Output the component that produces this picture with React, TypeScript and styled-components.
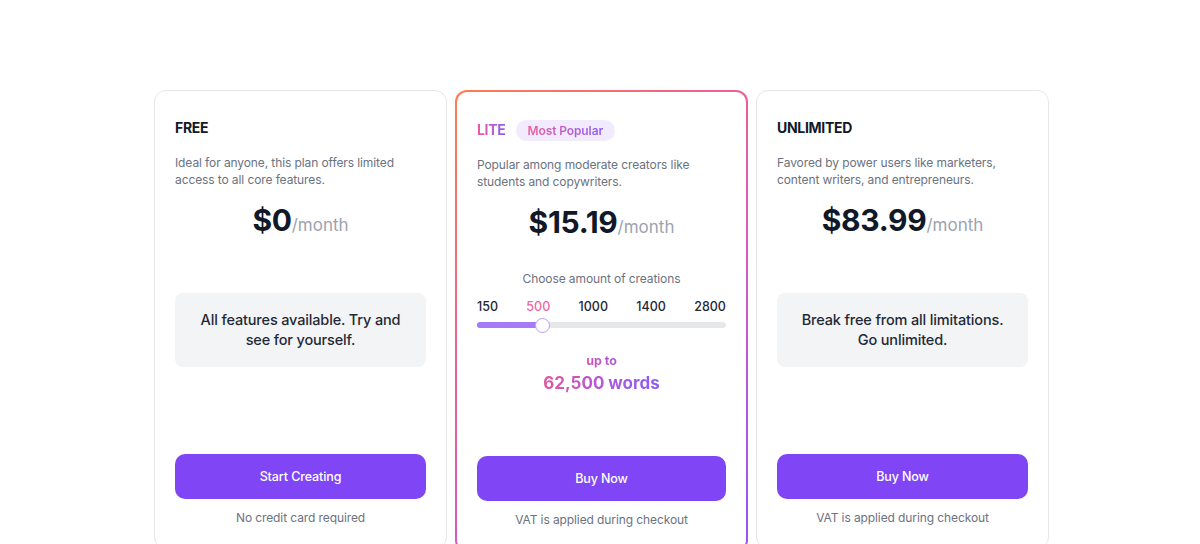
import React from "react";
import styled, { createGlobalStyle, css } from "styled-components";

const Global = createGlobalStyle`
  html, body { margin: 0; padding: 0; background: #ffffff; }
  body { font-family: Inter, "Noto Sans", sans-serif; -webkit-font-smoothing: antialiased; }
  * { box-sizing: border-box; }
`;

const Page = styled.main`
  height: 544px;
  overflow: hidden;
  padding-top: 90px;
  display: flex;
  justify-content: center;
`;

const Grid = styled.div`
  display: grid;
  grid-template-columns: repeat(3, 293px);
  gap: 8px;
  align-items: start;
  margin-left: 3px;
`;

const Card = styled.section<{ $featured?: boolean }>`
  display: flex;
  flex-direction: column;
  background: #ffffff;
  border-radius: 12px;
  border: 1px solid #e6e7eb;
  padding: 25px 20px 22px;
  ${(p) =>
    p.$featured &&
    css`
      border: 2px solid transparent;
      padding-top: 26px;
      background: linear-gradient(#ffffff, #ffffff) padding-box,
        linear-gradient(135deg, #ff7d4f 0%, #f0608f 35%, #d35ac4 62%, #9a55f4 95%) border-box;
    `}
`;

const Header = styled.div`
  display: flex;
  align-items: center;
  gap: 10px;
  height: 24px;
`;

const gradientText = css`
  background: linear-gradient(90deg, #ee5c9c 0%, #8b5cf6 100%);
  -webkit-background-clip: text;
  background-clip: text;
  color: transparent;
`;

const Title = styled.h2<{ $gradient?: boolean }>`
  margin: 0;
  font-size: 14px;
  line-height: 24px;
  font-weight: 700;
  color: #111827;
  letter-spacing: -0.3px;
  ${(p) => p.$gradient && gradientText}
`;

const Badge = styled.span`
  display: inline-flex;
  align-items: center;
  height: 21px;
  padding: 0 12px;
  border-radius: 999px;
  background: #f1ebfd;
  font-size: 12px;
  font-weight: 600;
  letter-spacing: -0.1px;
`;

const BadgeText = styled.span`
  ${gradientText}
`;

const Description = styled.p`
  margin: 14px 0 0;
  font-size: 12px;
  line-height: 17px;
  letter-spacing: -0.1px;
  color: #6b7280;
`;

const PriceRow = styled.div`
  margin-top: 12px;
  height: 40px;
  display: flex;
  align-items: baseline;
  justify-content: center;
`;

const Amount = styled.span`
  font-size: 30px;
  line-height: 40px;
  font-weight: 700;
  color: #111827;
  letter-spacing: -0.3px;
`;

const Period = styled.span`
  font-size: 17px;
  font-weight: 400;
  color: #9ca3af;
`;

const Middle = styled.div`
  height: 214px;
  display: flex;
  flex-direction: column;
`;

const FeatureBox = styled.div`
  margin-top: 53px;
  height: 74px;
  padding: 0 18px;
  border-radius: 8px;
  background: #f3f4f6;
  display: flex;
  align-items: center;
  justify-content: center;
  text-align: center;
  font-size: 14.5px;
  line-height: 20px;
  letter-spacing: -0.15px;
  font-weight: 500;
  color: #1f2937;
`;

const SliderLabel = styled.div`
  margin-top: 28px;
  text-align: center;
  font-size: 12px;
  line-height: 17px;
  letter-spacing: -0.1px;
  color: #6b7280;
`;

const Ticks = styled.div`
  margin-top: 11px;
  display: flex;
  justify-content: space-between;
  font-size: 12.5px;
  line-height: 17px;
  font-weight: 500;
`;

const Tick = styled.span<{ $active?: boolean }>`
  color: ${(p) => (p.$active ? "#ec6aa6" : "#1f2937")};
`;

const SliderRow = styled.div`
  height: 20px;
  display: flex;
  align-items: center;
`;

const Track = styled.div`
  position: relative;
  width: 100%;
  height: 6px;
  border-radius: 3px;
  background: #e5e7eb;
`;

const Fill = styled.div`
  height: 100%;
  border-radius: 3px;
  background: #a47cf8;
`;

const Thumb = styled.div`
  position: absolute;
  top: 50%;
  width: 15px;
  height: 15px;
  margin-left: -7.5px;
  margin-top: -7.5px;
  border-radius: 50%;
  background: #ffffff;
  border: 1.5px solid #b9a0f8;
`;

const UpTo = styled.div`
  margin-top: 17px;
  align-self: center;
  font-size: 12.5px;
  line-height: 17px;
  font-weight: 700;
  background: linear-gradient(90deg, #d454b5 0%, #a757e0 100%);
  -webkit-background-clip: text;
  background-clip: text;
  color: transparent;
`;

const Words = styled.div`
  margin-top: 3px;
  align-self: center;
  font-size: 17px;
  line-height: 22px;
  font-weight: 700;
  background: linear-gradient(90deg, #e3569f 0%, #b458d6 50%, #8a5cf6 100%);
  -webkit-background-clip: text;
  background-clip: text;
  color: transparent;
`;

const Button = styled.button`
  height: 45px;
  width: 100%;
  border: none;
  border-radius: 10px;
  background: #8046f6;
  color: #ffffff;
  font-family: inherit;
  font-size: 12.5px;
  letter-spacing: -0.1px;
  font-weight: 500;
  cursor: pointer;
`;

const Note = styled.div`
  margin-top: 10px;
  text-align: center;
  font-size: 12px;
  line-height: 17px;
  letter-spacing: -0.1px;
  color: #6b7280;
`;

const ticks = [150, 500, 1000, 1400, 2800];
const selected = 500;
const progress = 26.3;

export default function App() {
  return (
    <>
      <Global />
      <Page>
        <Grid>
          <Card>
            <Header>
              <Title>FREE</Title>
            </Header>
            <Description>
              Ideal for anyone, this plan offers limited access to all core features.
            </Description>
            <PriceRow>
              <Amount>$0</Amount>
              <Period>/month</Period>
            </PriceRow>
            <Middle>
              <FeatureBox>All features available. Try and see for yourself.</FeatureBox>
            </Middle>
            <Button>Start Creating</Button>
            <Note>No credit card required</Note>
          </Card>

          <Card $featured>
            <Header>
              <Title $gradient>LITE</Title>
              <Badge>
                <BadgeText>Most Popular</BadgeText>
              </Badge>
            </Header>
            <Description>
              Popular among moderate creators like students and copywriters.
            </Description>
            <PriceRow>
              <Amount>$15.19</Amount>
              <Period>/month</Period>
            </PriceRow>
            <Middle>
              <SliderLabel>Choose amount of creations</SliderLabel>
              <Ticks>
                {ticks.map((t) => (
                  <Tick key={t} $active={t === selected}>
                    {t}
                  </Tick>
                ))}
              </Ticks>
              <SliderRow>
                <Track>
                  <Fill style={{ width: `${progress}%` }} />
                  <Thumb style={{ left: `${progress}%` }} />
                </Track>
              </SliderRow>
              <UpTo>up to</UpTo>
              <Words>62,500 words</Words>
            </Middle>
            <Button>Buy Now</Button>
            <Note>VAT is applied during checkout</Note>
          </Card>

          <Card>
            <Header>
              <Title>UNLIMITED</Title>
            </Header>
            <Description>
              Favored by power users like marketers, content writers, and entrepreneurs.
            </Description>
            <PriceRow>
              <Amount>$83.99</Amount>
              <Period>/month</Period>
            </PriceRow>
            <Middle>
              <FeatureBox>Break free from all limitations. Go unlimited.</FeatureBox>
            </Middle>
            <Button>Buy Now</Button>
            <Note>VAT is applied during checkout</Note>
          </Card>
        </Grid>
      </Page>
    </>
  );
}
